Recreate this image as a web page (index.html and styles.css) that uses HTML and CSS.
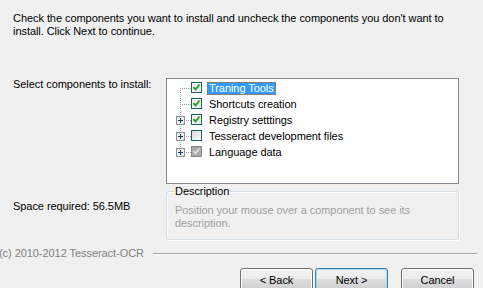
FILE: index.html
```html
<!DOCTYPE html>
<html lang="en">
<head>
    <meta charset="UTF-8">
    <title>Tesseract-OCR Setup - Choose Components</title>
    <link rel="stylesheet" href="styles.css">
</head>
<body>
    <div class="page">
        <p class="intro">Check the components you want to install and uncheck the components you don't want to<br>install. Click Next to continue.</p>

        <div class="components">
            <div class="side-label">Select components to install:</div>
            <ul class="tree">
                <li class="node first">
                    <span class="branch"></span>
                    <svg class="box" width="11" height="11" viewBox="0 0 11 11"><rect x="0.5" y="0.5" width="10" height="10" fill="#f4f4f4" stroke="#1e5e5e"/><path d="M2.5 5 L4.5 7.5 L8.5 2.5" stroke="#1fa51f" stroke-width="2" fill="none"/></svg>
                    <span class="label selected">Traning Tools</span>
                </li>
                <li class="node">
                    <span class="branch"></span>
                    <svg class="box" width="11" height="11" viewBox="0 0 11 11"><rect x="0.5" y="0.5" width="10" height="10" fill="#f4f4f4" stroke="#1e5e5e"/><path d="M2.5 5 L4.5 7.5 L8.5 2.5" stroke="#1fa51f" stroke-width="2" fill="none"/></svg>
                    <span class="label">Shortcuts creation</span>
                </li>
                <li class="node">
                    <span class="branch"><svg class="expander" width="9" height="9" viewBox="0 0 9 9"><rect x="0.5" y="0.5" width="8" height="8" fill="#ececec" stroke="#919191"/><path d="M2 4.5 H7 M4.5 2 V7" stroke="#1e3d5e"/></svg></span>
                    <svg class="box" width="11" height="11" viewBox="0 0 11 11"><rect x="0.5" y="0.5" width="10" height="10" fill="#f4f4f4" stroke="#1e5e5e"/><path d="M2.5 5 L4.5 7.5 L8.5 2.5" stroke="#1fa51f" stroke-width="2" fill="none"/></svg>
                    <span class="label">Registry setttings</span>
                </li>
                <li class="node">
                    <span class="branch"><svg class="expander" width="9" height="9" viewBox="0 0 9 9"><rect x="0.5" y="0.5" width="8" height="8" fill="#ececec" stroke="#919191"/><path d="M2 4.5 H7 M4.5 2 V7" stroke="#1e3d5e"/></svg></span>
                    <svg class="box" width="11" height="11" viewBox="0 0 11 11"><defs><linearGradient id="blank" x1="0" y1="0" x2="1" y2="1"><stop offset="0" stop-color="#d8d8d8"/><stop offset="1" stop-color="#ffffff"/></linearGradient></defs><rect x="0.5" y="0.5" width="10" height="10" fill="url(#blank)" stroke="#1e5e5e"/></svg>
                    <span class="label">Tesseract development files</span>
                </li>
                <li class="node last">
                    <span class="branch"><svg class="expander" width="9" height="9" viewBox="0 0 9 9"><rect x="0.5" y="0.5" width="8" height="8" fill="#ececec" stroke="#919191"/><path d="M2 4.5 H7 M4.5 2 V7" stroke="#1e3d5e"/></svg></span>
                    <svg class="box" width="11" height="11" viewBox="0 0 11 11"><rect x="0.5" y="0.5" width="10" height="10" fill="#a9a9a9" stroke="#8a8a8a"/><path d="M2.5 5 L4.5 7.5 L8.5 2.5" stroke="#dedede" stroke-width="2" fill="none"/></svg>
                    <span class="label">Language data</span>
                </li>
            </ul>

            <div class="side-label space">Space required: 56.5MB</div>
            <fieldset class="description">
                <legend>Description</legend>
                <p>Position your mouse over a component to see its<br>description.</p>
            </fieldset>
        </div>

        <div class="branding">
            <span class="brand-text">(c) 2010-2012 Tesseract-OCR</span>
            <span class="etched"></span>
        </div>

        <div class="buttons">
            <button type="button" class="back">&lt; Back</button>
            <button type="button" class="next">Next &gt;</button>
            <button type="button" class="cancel">Cancel</button>
        </div>
    </div>
</body>
</html>
```

FILE: styles.css
```css
/* Reset */
* {
    margin: 0;
    padding: 0;
    box-sizing: border-box;
}

body {
    font-family: 'Liberation Sans', Arial, sans-serif;
    font-size: 11px;
    line-height: 13px;
    letter-spacing: -0.06px;
    background-color: #f0f0f0;
    color: #000;
    overflow: hidden;
}

.page {
    width: 483px;
    height: 288px;
    overflow: hidden;
}

.intro {
    padding: 12px 0 0 13px;
}

.components {
    display: grid;
    grid-template-columns: 166px 293px;
    margin-top: 40px;
}

.side-label {
    padding-left: 13px;
}

.side-label.space {
    padding-top: 16px;
}

/* Tree view */
.tree {
    list-style: none;
    height: 106px;
    background: #fff;
    border: 1px solid #828790;
    padding: 1px 0 0 8px;
}

.node {
    display: flex;
    align-items: center;
    height: 16px;
}

.branch {
    position: relative;
    width: 16px;
    height: 16px;
    flex-shrink: 0;
}

.branch::before {
    content: "";
    position: absolute;
    left: 5px;
    top: 0;
    bottom: 0;
    width: 1px;
    background: repeating-linear-gradient(to bottom, #a0a0a0 0 1px, transparent 1px 2px);
}

.first .branch::before {
    top: 8px;
}

.last .branch::before {
    bottom: 8px;
}

.branch::after {
    content: "";
    position: absolute;
    left: 6px;
    top: 8px;
    width: 10px;
    height: 1px;
    background: repeating-linear-gradient(to right, transparent 0 1px, #a0a0a0 1px 2px);
}

.expander {
    position: absolute;
    left: 1px;
    top: 4px;
    z-index: 1;
    display: block;
}

.box {
    display: block;
    flex-shrink: 0;
    margin-top: -1px;
}

.label {
    display: inline-block;
    margin-left: 5px;
    padding: 0 2px;
    white-space: nowrap;
}

.label.selected {
    background: #3399ff;
    color: #fff;
    outline: 1px dotted #cc6600;
    outline-offset: -1px;
}

/* Description group */
.description {
    margin-top: 1px;
    height: 55px;
    border: 1px solid #d3dde3;
    border-radius: 3px;
    padding: 6px 8px 0 8px;
    box-shadow: 1px 1px 0 #fff, inset 1px 1px 0 #fff;
}

.description legend {
    padding: 0 1px;
    margin-left: -1px;
}

.description p {
    color: #a0a0a0;
}

/* Branding line */
.branding {
    display: flex;
    align-items: center;
    margin-top: 7px;
    padding-right: 6px;
}

.brand-text {
    margin-left: -1px;
    color: #808080;
    white-space: nowrap;
}

.etched {
    flex: 1;
    height: 2px;
    margin-left: 9px;
    border-top: 1px solid #a0a0a0;
    border-bottom: 1px solid #fff;
}

/* Buttons */
.buttons {
    display: flex;
    justify-content: flex-end;
    margin-top: 8px;
    padding-right: 9px;
}

button {
    width: 73px;
    height: 23px;
    font-family: inherit;
    font-size: 11px;
    letter-spacing: inherit;
    color: #000;
    border: 1px solid #707070;
    border-radius: 3px;
    background: linear-gradient(#f2f2f2 0%, #ebebeb 50%, #dddddd 50%, #cfcfcf 100%);
    box-shadow: inset 0 0 0 1px #fbfbfb;
}

.back {
    margin-right: 2px;
}

.next {
    margin-right: 13px;
    border-color: #3c7fb1;
    box-shadow: inset 0 0 0 1px #9fdcf7;
}
```
